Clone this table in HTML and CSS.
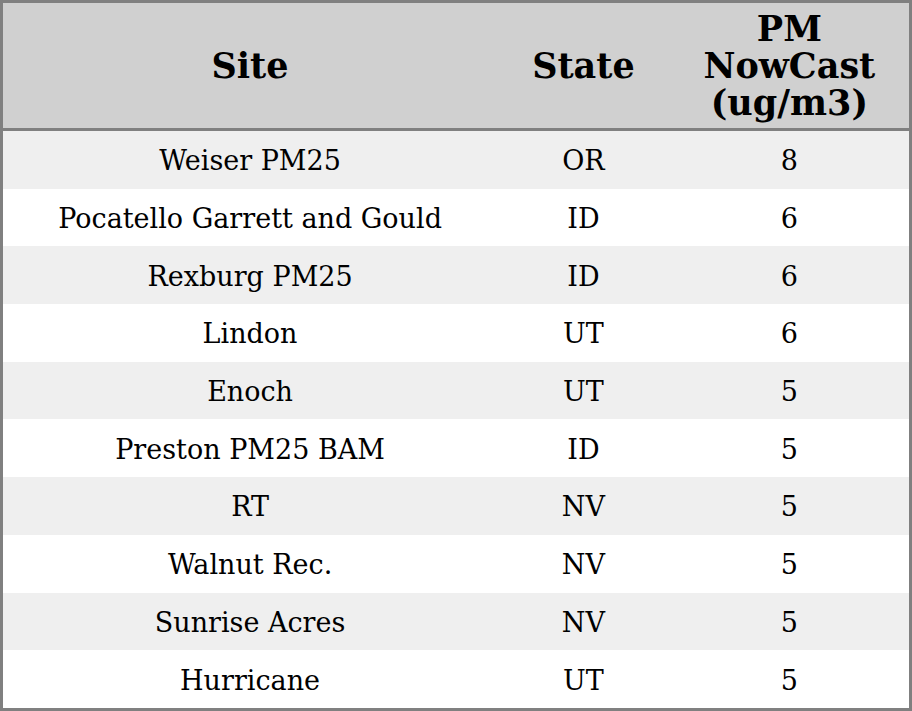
FILE: index.html
```html
<!DOCTYPE html>
<html>
<head>
<meta charset="utf-8">
<link rel="stylesheet" href="styles.css">
</head>
<body>
<table class="grid">
  <colgroup>
    <col class="c-site">
    <col class="c-state">
    <col class="c-pm">
  </colgroup>
  <thead>
    <tr><th>Site</th><th>State</th><th>PM<br>NowCast<br>(ug/m3)</th></tr>
  </thead>
  <tbody>
    <tr><td>Weiser PM25</td><td>OR</td><td>8</td></tr>
    <tr><td>Pocatello Garrett and Gould</td><td>ID</td><td>6</td></tr>
    <tr><td>Rexburg PM25</td><td>ID</td><td>6</td></tr>
    <tr><td>Lindon</td><td>UT</td><td>6</td></tr>
    <tr><td>Enoch</td><td>UT</td><td>5</td></tr>
    <tr><td>Preston PM25 BAM</td><td>ID</td><td>5</td></tr>
    <tr><td>RT</td><td>NV</td><td>5</td></tr>
    <tr><td>Walnut Rec.</td><td>NV</td><td>5</td></tr>
    <tr><td>Sunrise Acres</td><td>NV</td><td>5</td></tr>
    <tr><td>Hurricane</td><td>UT</td><td>5</td></tr>
  </tbody>
</table>
</body>
</html>
```
FILE: styles.css
```css
html, body {
  margin: 0;
  padding: 0;
  background: #ffffff;
}
.grid {
  width: 912px;
  height: 711px;
  border-collapse: collapse;
  border: 3px solid #808080;
  font-family: "DejaVu Serif", serif;
  color: #000;
  table-layout: fixed;
}
.c-site { width: 494px; }
.c-state { width: 172px; }
.c-pm { width: 240px; }
.grid th {
  background: #d0d0d0;
  font-weight: bold;
  font-size: 35px;
  line-height: 37px;
  height: 125px;
  padding: 0;
  text-align: center;
  vertical-align: middle;
  border-bottom: 3px solid #808080;
}
.grid td {
  font-size: 27px;
  height: 55px;
  padding: 2px 0 0;
  text-align: center;
  vertical-align: middle;
}
.grid tbody tr:nth-child(odd) td {
  background: #efefef;
}
```
